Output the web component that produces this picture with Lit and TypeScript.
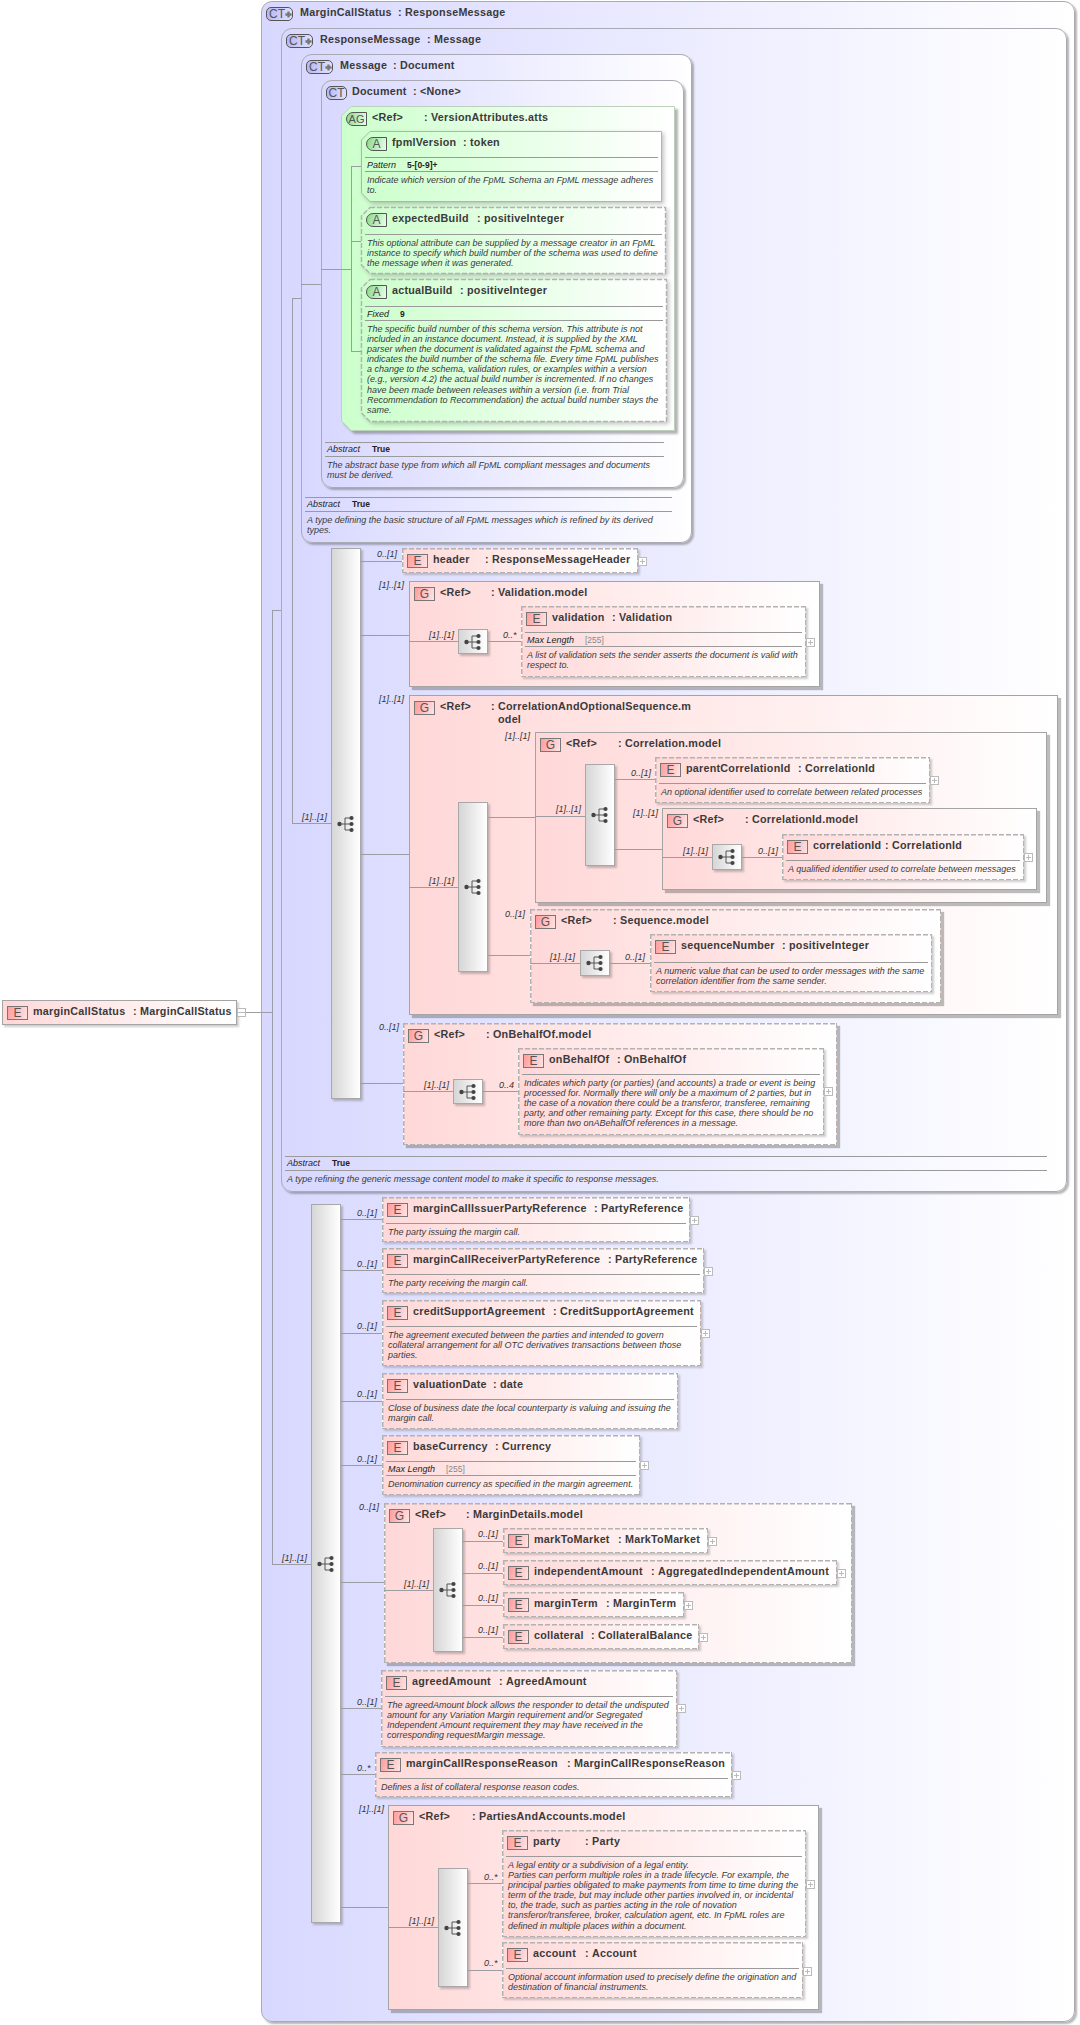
import { LitElement, css, html, svg } from 'lit';
import { customElement } from 'lit/decorators.js';

type Facet = { label: string; value: string; at: number; grey?: boolean };
type Box = {
  kind: 'ct' | 'ag' | 'a' | 'g' | 'e';
  x: number;
  y: number;
  r: number;
  b: number;
  dash?: boolean;
  icon: string;
  more?: boolean;
  name: string;
  type: string;
  colon: number;
  sep?: number;
  facet?: Facet;
  desc?: string;
  plus?: number;
  minus?: boolean;
  foot?: boolean;
};
type Seq = [x: number, y: number, b: number];
type Mult = [x: number, y: number, text: string];

const ct = (x: number, y: number, r: number, b: number, colon: number, name: string, type: string, more: boolean, desc?: string): Box => ({
  kind: 'ct', x, y, r, b, icon: 'CT', more, name, type, colon, desc, foot: !!desc,
  facet: desc ? { label: 'Abstract', value: 'True', at: 45 } : undefined,
});
const group = (x: number, y: number, r: number, b: number, colon: number, type: string, dash = false): Box => ({
  kind: 'g', x, y, r, b, dash, icon: 'G', name: '<Ref>', type, colon,
});
const el = (x: number, y: number, r: number, b: number, colon: number, name: string, type: string, o: Partial<Box> = {}): Box => ({
  kind: 'e', x, y, r, b, dash: true, icon: 'E', name, type, colon, ...o,
});
const attr = (y: number, b: number, r: number, colon: number, name: string, type: string, o: Partial<Box>): Box => ({
  kind: 'a', x: 361, y, r, b, dash: true, icon: 'A', name, type, colon, ...o,
});
const maxLen: Facet = { label: 'Max Length', value: '[255]', at: 58, grey: true };

const boxes: Box[] = [
  ct(261, 1, 1075, 2022, 398, 'MarginCallStatus', 'ResponseMessage', true),
  ct(281, 28, 1067, 1192, 427, 'ResponseMessage', 'Message', true, 'A type refining the generic message content model to make it specific to response messages.'),
  ct(301, 54, 692, 543, 393, 'Message', 'Document', true, 'A type defining the basic structure of all FpML messages which is refined by its derived\ntypes.'),
  ct(321, 80, 684, 488, 413, 'Document', '<None>', false, 'The abstract base type from which all FpML compliant messages and documents\nmust be derived.'),
  { kind: 'ag', x: 341, y: 106, r: 675, b: 431, icon: 'AG', name: '<Ref>', type: 'VersionAttributes.atts', colon: 424 },
  attr(131, 202, 662, 463, 'fpmlVersion', 'token', {
    dash: false, facet: { label: 'Pattern', value: '5-[0-9]+', at: 40 },
    desc: 'Indicate which version of the FpML Schema an FpML message adheres\nto.',
  }),
  attr(207, 274, 666, 477, 'expectedBuild', 'positiveInteger', {
    sep: 234,
    desc: 'This optional attribute can be supplied by a message creator in an FpML\ninstance to specify which build number of the schema was used to define\nthe message when it was generated.',
  }),
  attr(279, 422, 667, 460, 'actualBuild', 'positiveInteger', {
    sep: 306, facet: { label: 'Fixed', value: '9', at: 33 },
    desc: 'The specific build number of this schema version. This attribute is not\nincluded in an instance document. Instead, it is supplied by the XML\nparser when the document is validated against the FpML schema and\nindicates the build number of the schema file. Every time FpML publishes\na change to the schema, validation rules, or examples within a version\n(e.g., version 4.2) the actual build number is incremented. If no changes\nhave been made between releases within a version (i.e. from Trial\nRecommendation to Recommendation) the actual build number stays the\nsame.',
  }),

  el(402, 548, 638, 573, 485, 'header', 'ResponseMessageHeader', { plus: 557 }),
  group(409, 581, 820, 687, 491, 'Validation.model'),
  el(521, 606, 806, 677, 612, 'validation', 'Validation', {
    plus: 638, facet: maxLen,
    desc: 'A list of validation sets the sender asserts the document is valid with\nrespect to.',
  }),
  group(409, 695, 1058, 1015, 491, 'CorrelationAndOptionalSequence.m\nodel'),
  group(535, 732, 1047, 903, 618, 'Correlation.model'),
  el(655, 757, 930, 803, 798, 'parentCorrelationId', 'CorrelationId', {
    plus: 776, desc: 'An optional identifier used to correlate between related processes',
  }),
  group(662, 808, 1037, 890, 745, 'CorrelationId.model'),
  el(782, 834, 1024, 880, 885, 'correlationId', 'CorrelationId', {
    plus: 853, desc: 'A qualified identifier used to correlate between messages',
  }),
  group(530, 909, 941, 1003, 613, 'Sequence.model', true),
  el(650, 934, 932, 992, 782, 'sequenceNumber', 'positiveInteger', {
    sep: 962,
    desc: 'A numeric value that can be used to order messages with the same\ncorrelation identifier from the same sender.',
  }),
  group(403, 1023, 837, 1145, 486, 'OnBehalfOf.model', true),
  el(518, 1048, 824, 1135, 617, 'onBehalfOf', 'OnBehalfOf', {
    plus: 1087,
    desc: 'Indicates which party (or parties) (and accounts) a trade or event is being\nprocessed for. Normally there will only be a maximum of 2 parties, but in\nthe case of a novation there could be a transferor, transferee, remaining\nparty, and other remaining party. Except for this case, there should be no\nmore than two onABehalfOf references in a message.',
  }),

  el(382, 1197, 690, 1242, 594, 'marginCallIssuerPartyReference', 'PartyReference', { plus: 1216, desc: 'The party issuing the margin call.' }),
  el(382, 1248, 704, 1293, 608, 'marginCallReceiverPartyReference', 'PartyReference', { plus: 1267, desc: 'The party receiving the margin call.' }),
  el(382, 1300, 701, 1366, 553, 'creditSupportAgreement', 'CreditSupportAgreement', {
    plus: 1329,
    desc: 'The agreement executed between the parties and intended to govern\ncollateral arrangement for all OTC derivatives transactions between those\nparties.',
  }),
  el(382, 1373, 678, 1429, 493, 'valuationDate', 'date', {
    desc: 'Close of business date the local counterparty is valuing and issuing the\nmargin call.',
  }),
  el(382, 1435, 640, 1495, 495, 'baseCurrency', 'Currency', {
    plus: 1461, facet: maxLen, desc: 'Denomination currency as specified in the margin agreement.',
  }),
  group(384, 1503, 852, 1663, 466, 'MarginDetails.model', true),
  el(503, 1528, 708, 1553, 618, 'markToMarket', 'MarkToMarket', { plus: 1537 }),
  el(503, 1560, 837, 1585, 651, 'independentAmount', 'AggregatedIndependentAmount', { plus: 1569 }),
  el(503, 1592, 684, 1617, 606, 'marginTerm', 'MarginTerm', { plus: 1601 }),
  el(503, 1624, 699, 1649, 591, 'collateral', 'CollateralBalance', { plus: 1633 }),
  el(381, 1670, 677, 1747, 499, 'agreedAmount', 'AgreedAmount', {
    plus: 1704,
    desc: 'The agreedAmount block allows the responder to detail the undisputed\namount for any Variation Margin requirement and/or Segregated\nIndependent Amount requirement they may have received in the\ncorresponding requestMargin message.',
  }),
  el(375, 1752, 732, 1797, 567, 'marginCallResponseReason', 'MarginCallResponseReason', {
    plus: 1771, desc: 'Defines a list of collateral response reason codes.',
  }),
  group(388, 1805, 819, 2010, 472, 'PartiesAndAccounts.model'),
  el(502, 1830, 806, 1937, 585, 'party', 'Party', {
    plus: 1880,
    desc: 'A legal entity or a subdivision of a legal entity.\nParties can perform multiple roles in a trade lifecycle. For example, the\nprincipal parties obligated to make payments from time to time during the\nterm of the trade, but may include other parties involved in, or incidental\nto, the trade, such as parties acting in the role of novation\ntransferor/transferee, broker, calculation agent, etc. In FpML roles are\ndefined in multiple places within a document.',
  }),
  el(502, 1942, 803, 1998, 585, 'account', 'Account', {
    plus: 1967,
    desc: 'Optional account information used to precisely define the origination and\ndestination of financial instruments.',
  }),
  el(2, 1000, 237, 1025, 133, 'marginCallStatus', 'MarginCallStatus', { dash: false, plus: 1008, minus: true }),
];

const seqs: Seq[] = [
  [331, 548, 1099], [458, 629, 654], [458, 802, 972], [585, 764, 866], [712, 844, 870],
  [580, 950, 976], [453, 1079, 1104], [311, 1204, 1923], [433, 1528, 1652], [438, 1868, 1987],
];

const one = '[1]..[1]';
const opt = '0..[1]';
const many = '0..*';
const mults: Mult[] = [
  [302, 817, one], [377, 554, opt], [379, 585, one], [429, 635, one], [503, 635, many],
  [379, 699, one], [429, 881, one], [505, 736, one], [556, 809, one], [631, 773, opt],
  [633, 813, one], [683, 851, one], [758, 851, opt], [505, 914, opt], [550, 957, one],
  [625, 957, opt], [379, 1027, opt], [424, 1085, one], [499, 1085, '0..4'],
  [282, 1558, one], [357, 1213, opt], [357, 1264, opt], [357, 1326, opt], [357, 1394, opt],
  [357, 1459, opt], [359, 1507, opt], [404, 1584, one], [478, 1534, opt], [478, 1566, opt],
  [478, 1598, opt], [478, 1630, opt], [357, 1702, opt], [357, 1768, many], [359, 1809, one],
  [409, 1921, one], [484, 1877, many], [484, 1963, many],
];

const wires = [
  'M246 1012H272', 'M272 610V1564H311', 'M272 610H281', 'M292 298V823H332', 'M292 298H301', 'M301 284H321',
  'M321 269H351', 'M351 166V351H361', 'M351 166H361', 'M351 241H361',
  'M360 561H402', 'M360 635H409', 'M360 854H409', 'M360 1083H403',
  'M409 641H458', 'M488 641H521', 'M409 887H458', 'M488 817H535', 'M488 955H530',
  'M535 816H585', 'M615 779H655', 'M615 849H662', 'M662 857H712', 'M742 857H782',
  'M530 963H580', 'M610 963H650', 'M403 1091H453', 'M483 1091H518',
  'M341 1219H382', 'M341 1270H382', 'M341 1333H382', 'M341 1401H382', 'M341 1465H382',
  'M341 1582H384', 'M384 1590H433', 'M463 1541H503', 'M463 1573H503', 'M463 1605H503', 'M463 1637H503',
  'M341 1708H381', 'M341 1774H375', 'M341 1907H388', 'M388 1927H438', 'M467 1883H502', 'M467 1970H502',
];

@customElement('app-root')
export class AppRoot extends LitElement {
  static override styles = css`
    :host {
      display: block;
      background: #fff;
    }
    .canvas {
      position: relative;
      width: 1080px;
      height: 2025px;
      overflow: hidden;
      background: #fff;
      font-family: 'Liberation Sans', Arial, sans-serif;
      color: #333;
    }
    .box {
      position: absolute;
      box-sizing: border-box;
      display: flex;
      flex-direction: column;
      border: 1px solid #a4a4a4;
      padding: 0 3px;
    }
    .box.dash {
      border-color: transparent;
    }
    .box.dash:not(.a)::after {
      content: '';
      position: absolute;
      inset: -1px;
      pointer-events: none;
      background:
        repeating-linear-gradient(90deg, #b2b2b2 0 5px, transparent 5px 7px) left top / 100% 1.5px no-repeat,
        repeating-linear-gradient(90deg, #b2b2b2 0 5px, transparent 5px 7px) left bottom / 100% 1.5px no-repeat,
        repeating-linear-gradient(180deg, #b2b2b2 0 5px, transparent 5px 7px) left top / 1.5px 100% no-repeat,
        repeating-linear-gradient(180deg, #b2b2b2 0 5px, transparent 5px 7px) right top / 1.5px 100% no-repeat;
    }
    .ct {
      background: linear-gradient(90deg, #d8d8ff, #fff);
      border-color: #aaaab4;
      border-radius: 11px;
      box-shadow: 2px 2px 2px rgba(90, 90, 90, 0.45);
    }
    .g {
      background: linear-gradient(90deg, #ffd8d8, #fff);
      box-shadow: 3px 3px 1px rgba(90, 90, 90, 0.4);
    }
    .e {
      background: linear-gradient(90deg, #ffd8d8, #fff);
      box-shadow: 2px 2px 2px rgba(90, 90, 90, 0.3);
    }
    .ag,
    .a {
      border: 0;
      padding: 1px 4px;
    }
    .frame {
      position: absolute;
      left: 0;
      top: 0;
      overflow: visible;
    }
    .ag .frame {
      filter: drop-shadow(3px 3px 1px rgba(90, 90, 90, 0.45));
    }
    .a .frame {
      filter: drop-shadow(2px 2px 2px rgba(90, 90, 90, 0.35));
    }
    .head {
      position: relative;
      display: flex;
      align-items: flex-start;
      box-sizing: border-box;
      padding: 5px 0 0 1px;
      flex: none;
    }
    .icon {
      flex: none;
      box-sizing: border-box;
      width: 21px;
      height: 14px;
      margin-right: 5px;
      display: flex;
      align-items: center;
      justify-content: center;
      border: 1px solid #777;
      font-size: 12px;
      line-height: 12px;
      color: #555;
    }
    .icon.e,
    .icon.g {
      background: linear-gradient(105deg, #ff9c9c, #ffe4e4);
      box-shadow: none;
    }
    .icon.a,
    .icon.ag {
      background: linear-gradient(105deg, #8ed88e, #e8ffe8);
      border-color: #555;
      border-radius: 7px 0 0 7px;
      padding: 0;
    }
    .icon.ag {
      font-size: 11px;
    }
    .icon.ct {
      background: linear-gradient(100deg, #b4b4f4, #e4e4ff);
      border-color: #555;
      border-radius: 5px;
      box-shadow: none;
    }
    .icon.wide {
      width: 27px;
      margin-right: 7px;
      justify-content: flex-start;
      padding-left: 2px;
    }
    .title {
      display: flex;
      margin-top: -1px;
      font-size: 10.75px;
      line-height: 13px;
      font-weight: 700;
      letter-spacing: 0.25px;
      white-space: pre;
      color: #3a3a3a;
    }
    .colon {
      flex: none;
      width: 7px;
    }
    .rule {
      position: relative;
      flex: none;
      height: 0;
      border-top: 1px solid #9a9a9a;
    }
    .facet {
      position: relative;
      flex: none;
      display: flex;
      align-items: center;
      height: 13px;
      padding-left: 2px;
      font-size: 9px;
      font-style: italic;
      color: #222;
      white-space: nowrap;
    }
    .facet b {
      font-style: normal;
      font-size: 8.5px;
    }
    .facet i {
      font-style: normal;
      font-size: 8.5px;
      color: #888;
    }
    .desc {
      position: relative;
      flex: none;
      padding: 3px 0 0 2px;
      font-size: 9px;
      line-height: 10.1px;
      font-style: italic;
      color: #3a3a3a;
      white-space: pre;
    }
    .foot {
      margin-top: auto;
      margin-right: 16px;
      padding-bottom: 7px;
    }
    .seq {
      position: absolute;
      box-sizing: border-box;
      display: flex;
      align-items: center;
      justify-content: center;
      width: 30px;
      border: 1px solid #a8a8a8;
      background: linear-gradient(90deg, #d6d6d6, #fff);
      box-shadow: 2px 2px 2px rgba(90, 90, 90, 0.35);
    }
    .mult {
      position: absolute;
      font-size: 9px;
      line-height: 12px;
      margin-top: -6px;
      font-style: italic;
      color: #333;
      white-space: nowrap;
    }
    .toggle {
      position: absolute;
      width: 9px;
      height: 9px;
    }
    .wires {
      position: absolute;
      left: 0;
      top: 0;
      pointer-events: none;
    }
  `;

  private renderFrame(b: Box, i: number) {
    const w = b.r - b.x;
    const h = b.b - b.y;
    const c = b.kind === 'ag' ? 10 : 9;
    return svg`<svg class="frame" width=${w} height=${h} viewBox="0 0 ${w} ${h}">
      <defs>
        <linearGradient id=${'fill' + i}>
          <stop offset="0" stop-color="#ccffcc" />
          <stop offset="1" stop-color="#fff" />
        </linearGradient>
      </defs>
      <polygon
        points="${c},0.5 ${w - 0.5},0.5 ${w - 0.5},${h - 0.5} ${c},${h - 0.5} 0.5,${h - c} 0.5,${c}"
        fill=${`url(#fill${i})`}
        stroke=${b.kind === 'ag' ? '#bcd0bc' : '#b2b2b2'}
        stroke-width=${b.dash ? 1.4 : 1}
        stroke-dasharray=${b.dash ? '5 2' : 'none'}
      />
    </svg>`;
  }

  private renderRows(b: Box) {
    const headH = (b.sep ?? b.y + 26) - b.y - 1;
    const head = html`
      <div class="head" style="height:${headH}px">
        <div class="icon ${b.kind} ${b.more ? 'wide' : ''}">
          ${b.icon}${b.more
            ? svg`<svg width="9" height="9" viewBox="0 0 9 9"><path d="M3 0.5h3v2.5h2.5v3h-2.5v2.5h-3v-2.5h-2.5v-3h2.5z" fill="#777"/></svg>`
            : ''}
        </div>
        <div class="title">
          <span style="width:${this.nameWidth(b)}px">${b.name}</span>
          <span class="colon">:</span>
          <span>${b.type}</span>
        </div>
      </div>
    `;
    if (b.kind === 'g' || b.kind === 'ag') return head;
    const tail = html`
      ${b.facet
        ? html`<div class="rule"></div>
            <div class="facet">
              <span style="width:${b.facet.at}px">${b.facet.label}</span>
              ${b.facet.grey ? html`<i>${b.facet.value}</i>` : html`<b>${b.facet.value}</b>`}
            </div>`
        : ''}
      ${b.desc ? html`<div class="rule"></div><div class="desc">${b.desc}</div>` : ''}
    `;
    return html`${head}${b.foot ? html`<div class="foot">${tail}</div>` : tail}`;
  }

  private nameWidth(b: Box) {
    const icon = b.more ? 27 + 7 : 21 + 5;
    return b.colon - (b.x + 5 + icon);
  }

  private renderToggle(b: Box) {
    if (b.plus === undefined) return '';
    return html`<svg class="toggle" style="left:${b.r}px;top:${b.plus}px" viewBox="0 0 9 9">
      <rect x="0.5" y="0.5" width="8" height="8" fill="#fff" stroke="#bbb" />
      <path d=${b.minus ? 'M0 4.5H9' : 'M2 4.5H7M4.5 2V7'} stroke="#bbb" fill="none" />
    </svg>`;
  }

  protected override render() {
    return html`
      <div class="canvas">
        ${boxes.map(
          (b, i) => html`
            <div
              class="box ${b.kind} ${b.dash ? 'dash' : ''}"
              style="left:${b.x}px;top:${b.y}px;width:${b.r - b.x}px;height:${b.b - b.y}px"
            >
              ${b.kind === 'a' || b.kind === 'ag' ? this.renderFrame(b, i) : ''} ${this.renderRows(b)}
            </div>
            ${this.renderToggle(b)}
          `,
        )}
        ${seqs.map(
          ([x, y, bottom]) => html`
            <div class="seq" style="left:${x}px;top:${y}px;height:${bottom - y}px">
              <svg width="18" height="18" viewBox="0 0 18 18">
                <path d="M2 9H8M8 3V15M8 3H14M8 9H14M8 15H14" stroke="#555" fill="none" />
                <circle cx="2.5" cy="9" r="2.2" fill="#444" />
                <circle cx="14.5" cy="3" r="2.1" fill="#444" />
                <circle cx="14.5" cy="9" r="2.1" fill="#444" />
                <circle cx="14.5" cy="15" r="2.1" fill="#444" />
              </svg>
            </div>
          `,
        )}
        ${mults.map(([x, y, t]) => html`<span class="mult" style="left:${x}px;top:${y}px">${t}</span>`)}
        <svg class="wires" width="1080" height="2025" shape-rendering="crispEdges">
          <path d=${wires.join('')} stroke="#9c9ca4" fill="none" />
        </svg>
      </div>
    `;
  }
}
